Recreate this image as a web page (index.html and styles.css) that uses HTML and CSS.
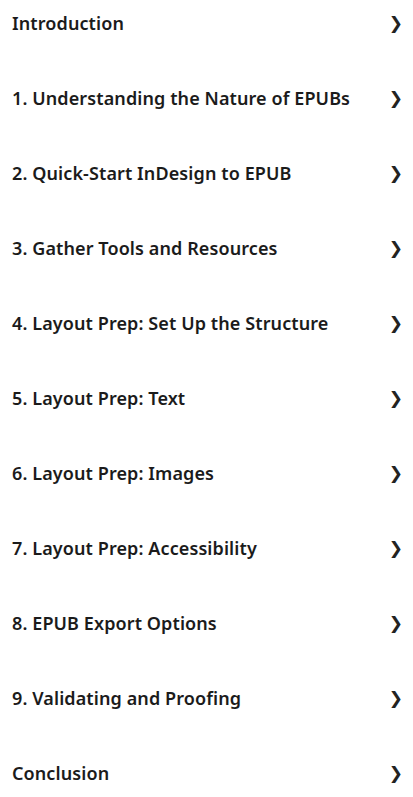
FILE: index.html
```html
<!DOCTYPE html>
<html>
<head>
<meta charset="utf-8">
<link rel="stylesheet" href="styles.css">
</head>
<body>
<ul class="toc">
  <li class="item"><span class="label">Introduction</span><span class="chev">❯</span></li>
  <li class="item"><span class="label">1. Understanding the Nature of EPUBs</span><span class="chev">❯</span></li>
  <li class="item"><span class="label">2. Quick-Start InDesign to EPUB</span><span class="chev">❯</span></li>
  <li class="item"><span class="label">3. Gather Tools and Resources</span><span class="chev">❯</span></li>
  <li class="item"><span class="label">4. Layout Prep: Set Up the Structure</span><span class="chev">❯</span></li>
  <li class="item"><span class="label">5. Layout Prep: Text</span><span class="chev">❯</span></li>
  <li class="item"><span class="label">6. Layout Prep: Images</span><span class="chev">❯</span></li>
  <li class="item"><span class="label">7. Layout Prep: Accessibility</span><span class="chev">❯</span></li>
  <li class="item"><span class="label">8. EPUB Export Options</span><span class="chev">❯</span></li>
  <li class="item"><span class="label">9. Validating and Proofing</span><span class="chev">❯</span></li>
  <li class="item"><span class="label">Conclusion</span><span class="chev">❯</span></li>
</ul>
</body>
</html>
```
FILE: styles.css
```css
html, body {
  margin: 0;
  padding: 0;
  background: #ffffff;
}
.toc {
  list-style: none;
  margin: 0;
  padding: 0;
  font-family: "Noto Sans", "Open Sans", sans-serif;
  font-weight: 600;
  font-size: 18px;
  letter-spacing: 0.1px;
  color: #1b1b1b;
}
.item {
  display: flex;
  align-items: center;
  justify-content: space-between;
  height: 75px;
  box-sizing: border-box;
  padding: 0 10px 29px 12px;
  line-height: 46px;
}
.chev {
  font-family: "DejaVu Sans", sans-serif;
  font-weight: 400;
  font-size: 17px;
  color: #222;
}
```
